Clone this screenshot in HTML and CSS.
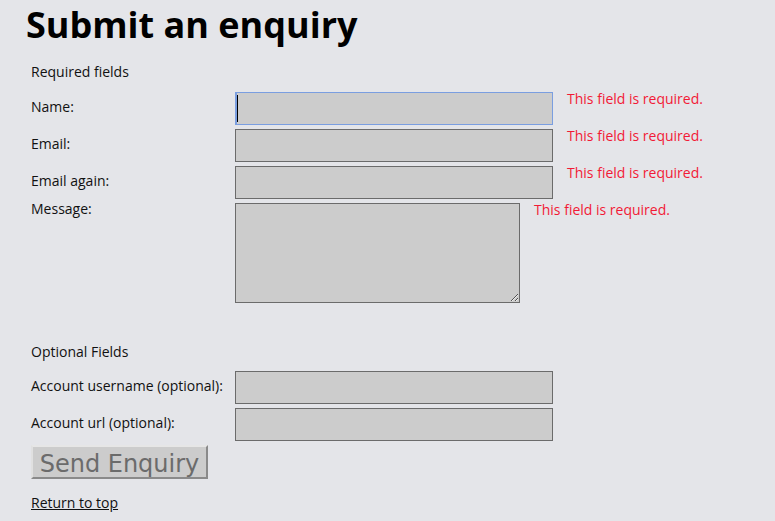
FILE: index.html
```html
<!DOCTYPE html>
<html lang="en">
<head>
<meta charset="utf-8">
<title>Submit an enquiry</title>
<link rel="stylesheet" href="styles.css">
</head>
<body>
<main class="page">
  <h1 class="title">Submit an enquiry</h1>
  <form class="form">
    <section class="group">
      <p class="group-title">Required fields</p>
      <div class="rows">
        <label class="label" for="name">Name:</label>
        <input class="field is-focused" id="name" type="text">
        <span class="error">This field is required.</span>

        <label class="label" for="email">Email:</label>
        <input class="field" id="email" type="text">
        <span class="error">This field is required.</span>

        <label class="label" for="email2">Email again:</label>
        <input class="field" id="email2" type="text">
        <span class="error">This field is required.</span>

        <label class="label label-top" for="message">Message:</label>
        <div class="area-cell">
          <textarea class="area" id="message"></textarea>
          <span class="error">This field is required.</span>
        </div>
      </div>
    </section>
    <section class="group group-optional">
      <p class="group-title">Optional Fields</p>
      <div class="rows rows-optional">
        <label class="label" for="user">Account username (optional):</label>
        <input class="field" id="user" type="text">
        <span></span>
        <label class="label" for="url">Account url (optional):</label>
        <input class="field" id="url" type="text">
        <span></span>
      </div>
    </section>
    <button class="send" type="button">Send Enquiry</button>
  </form>
  <a class="top-link" href="#">Return to top</a>
</main>
</body>
</html>
```

FILE: styles.css
```css
html, body {
  margin: 0;
  padding: 0;
  background: #e4e5e9;
}

body {
  font-family: "Open Sans", "Noto Sans", sans-serif;
  font-size: 14px;
  color: #111;
}

.page {
  padding: 0 0 0 31px;
}

.title {
  margin: 0 0 0 -5px;
  font-size: 36px;
  font-weight: 700;
  line-height: 49px;
  color: #000;
}

.form {
  margin: 0;
}

.group-title {
  margin: 13px 0 0 0;
  line-height: 20px;
}

.rows {
  display: grid;
  grid-template-columns: 204px max-content max-content;
  row-gap: 4px;
  margin-top: 10px;
}

.rows-optional {
  margin-top: 9px;
}

.label {
  align-self: center;
  line-height: 20px;
  padding-bottom: 4px;
}

.label-top {
  align-self: start;
  padding: 0;
  margin-top: -4px;
}

.field {
  box-sizing: border-box;
  width: 318px;
  height: 33px;
  margin: 0;
  padding: 0 6px;
  border: 1px solid #6b6b6b;
  background: #cccccc;
  font: inherit;
  outline: none;
}

.field.is-focused {
  border-color: #7a9ee0;
  box-shadow: inset 1px 0 0 #7a9ee0;
  background-image: linear-gradient(#000, #000);
  background-size: 1px 27px;
  background-position: 1px center;
  background-repeat: no-repeat;
}

.error {
  align-self: start;
  margin: -3px 0 0 14px;
  line-height: 20px;
  color: #f21a36;
}

.area-cell {
  grid-column: 2 / 4;
  display: flex;
  align-items: flex-start;
}

.area {
  box-sizing: border-box;
  width: 285px;
  height: 100px;
  margin: 0;
  border: 1px solid #6b6b6b;
  background: #cccccc;
  font: inherit;
  resize: both;
}

.group-optional {
  margin-top: 39px;
}

.send {
  display: block;
  box-sizing: border-box;
  width: 177px;
  height: 34px;
  margin: 4px 0 0 0;
  padding: 4px 0 0 0;
  border: 2px solid;
  border-color: #e6e6e6 #8a8a8a #8a8a8a #e0e0e0;
  background: #cccccc;
  color: #6b6b6b;
  font-family: "DejaVu Sans", "Open Sans", sans-serif;
  font-size: 24px;
  line-height: 26px;
}

.top-link {
  display: inline-block;
  margin-top: 14px;
  color: #111;
  line-height: 20px;
}
```
